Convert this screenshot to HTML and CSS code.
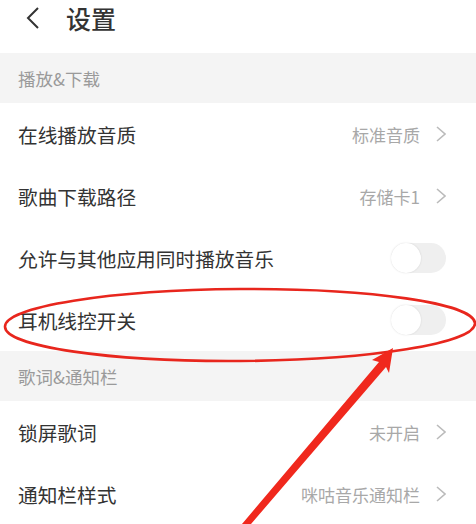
FILE: index.html
```html
<!DOCTYPE html>
<html lang="zh">
<head>
<meta charset="utf-8">
<link rel="stylesheet" href="styles.css">
</head>
<body>
<div class="page">
  <header class="topbar">
    <svg class="back" width="14" height="22" viewBox="0 0 14 22"><path d="M12 1 L2 11 L12 21" fill="none" stroke="#333" stroke-width="2"/></svg>
    <h1 class="title">设置</h1>
  </header>
  <div class="section">播放&amp;下载</div>
  <div class="row"><span class="label">在线播放音质</span><span class="value">标准音质<svg class="chev" width="10" height="16" viewBox="0 0 10 16"><path d="M1 1 L9 8 L1 15" fill="none" stroke="#bbb" stroke-width="1.6"/></svg></span></div>
  <div class="row"><span class="label">歌曲下载路径</span><span class="value">存储卡1<svg class="chev" width="10" height="16" viewBox="0 0 10 16"><path d="M1 1 L9 8 L1 15" fill="none" stroke="#bbb" stroke-width="1.6"/></svg></span></div>
  <div class="row"><span class="label">允许与其他应用同时播放音乐</span><span class="toggle"><span class="knob"></span></span></div>
  <div class="row"><span class="label">耳机线控开关</span><span class="toggle"><span class="knob"></span></span></div>
  <div class="section">歌词&amp;通知栏</div>
  <div class="row"><span class="label">锁屏歌词</span><span class="value">未开启<svg class="chev" width="10" height="16" viewBox="0 0 10 16"><path d="M1 1 L9 8 L1 15" fill="none" stroke="#bbb" stroke-width="1.6"/></svg></span></div>
  <div class="row"><span class="label">通知栏样式</span><span class="value">咪咕音乐通知栏<svg class="chev" width="10" height="16" viewBox="0 0 10 16"><path d="M1 1 L9 8 L1 15" fill="none" stroke="#bbb" stroke-width="1.6"/></svg></span></div>
  <svg class="annot" width="476" height="524" viewBox="0 0 476 524">
    <ellipse cx="240" cy="325" rx="235" ry="36" fill="none" stroke="#e8261d" stroke-width="2.6" transform="rotate(-0.4 240 325)"/>
    <polygon points="393,348 372,360 379,362 242,524 251,524 386,367 389,373" fill="#f0281d"/>
  </svg>
</div>
</body>
</html>
```
FILE: styles.css
```css
* { box-sizing: border-box; }
html, body { margin: 0; padding: 0; background: #fff; }
body { font-family: "Noto Sans CJK SC", "Noto Sans", sans-serif; color: #333; }
.page { position: relative; width: 476px; height: 524px; overflow: hidden; }
.topbar { height: 53px; display: flex; align-items: center; padding-left: 26px; padding-bottom: 17px; }
.back { display: block; }
.title { margin: 0 0 0 26px; font-size: 25px; font-weight: 500; color: #333; line-height: 1; }
.section { height: 50px; background: #f4f4f4; color: #9a9a9a; font-size: 17.5px; display: flex; align-items: center; padding-left: 18px; }
.row { height: 62px; display: flex; align-items: center; justify-content: space-between; padding: 0 30px 0 18px; }
.label { font-size: 19.7px; color: #333; }
.value { font-size: 17px; color: #a8a8a8; display: flex; align-items: center; gap: 16px; }
.chev { display: block; }
.toggle { width: 55px; height: 30px; border-radius: 15px; background: #efefef; position: relative; display: block; }
.knob { position: absolute; left: 0; top: 0; width: 30px; height: 30px; border-radius: 50%; background: #fff; box-shadow: 0 0 2px rgba(0,0,0,0.12); }
.annot { position: absolute; left: 0; top: 0; pointer-events: none; }
```
